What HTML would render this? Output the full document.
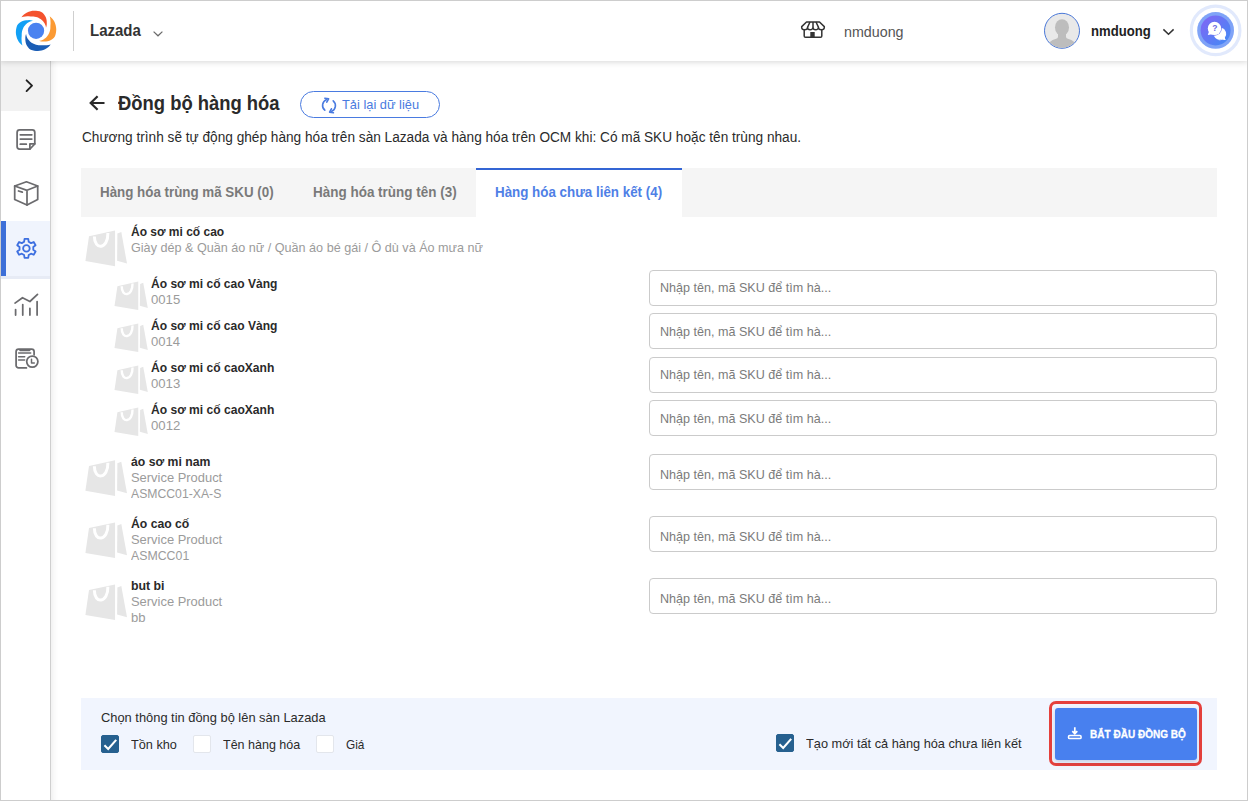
<!DOCTYPE html>
<html lang="vi">
<head>
<meta charset="utf-8">
<title>Đồng bộ hàng hóa</title>
<style>
*{box-sizing:border-box;margin:0;padding:0}
html,body{width:1248px;height:801px;overflow:hidden;background:#fff}
body{font-family:"Liberation Sans",sans-serif;color:#212121;font-size:14px;position:relative}
.t{position:absolute;white-space:nowrap;line-height:1;transform-origin:0 0}
.b{font-weight:bold}
.a{position:absolute}
svg{position:absolute;overflow:visible}
#frame{position:absolute;left:0;top:0;width:1248px;height:801px;border:1px solid #cdcdcd;z-index:50;pointer-events:none}
#header{position:absolute;left:0;top:0;width:1248px;height:61px;background:#fff;box-shadow:0 1px 6px rgba(0,0,0,.16);z-index:10}
#sidebar{position:absolute;left:0;top:61px;width:51px;height:740px;background:#fff;border-right:1px solid #cfcfcf;z-index:5}
#sidebar .tog{position:absolute;left:0;top:0;width:50px;height:50px;background:#f2f2f2}
#sidebar .act{position:absolute;left:1px;top:160px;width:49px;height:55px;background:#f0f4fd;border-left:5px solid #3d6fd8;box-shadow:0 3px 0 #e7ebf5}
#content{position:absolute;left:51px;top:61px;width:1197px;height:740px;background:#fff;box-shadow:inset 7px 0 6px -5px rgba(0,0,0,.07)}
.tabbar{position:absolute;left:81px;top:168px;width:1136px;height:49px;background:#f5f5f5}
.tabact{position:absolute;left:476px;top:168px;width:206px;height:49px;background:#fff;border-top:2px solid #3465d4}
.inp{position:absolute;left:649px;width:568px;height:36px;border:1px solid #cbcbcb;border-radius:4px;background:#fff}
.panel{position:absolute;left:81px;top:698px;width:1136px;height:72px;background:#f1f5fe}
.cb{position:absolute;width:18px;height:18px;border-radius:2px;background:#fff;border:1px solid #e3e6ec}
.cb.on{background:#26608f;border-color:#26608f}
</style>
</head>
<body>
<div id="content"></div>
<div id="sidebar"><div class="tog"></div><div class="act"></div></div>
<div id="header"></div>
<div class="a" style="left:73px;top:11px;width:1px;height:40px;background:#cfcfcf;z-index:20"></div>
<div class="a" id="btn_reload" style="left:300px;top:91px;width:140px;height:27px;border:1px solid #4a7be0;border-radius:14px"></div>
<div class="tabbar"></div><div class="tabact"></div>
<div class="inp" style="top:270px"></div>
<div class="inp" style="top:313px"></div>
<div class="inp" style="top:357px"></div>
<div class="inp" style="top:400px"></div>
<div class="inp" style="top:454px"></div>
<div class="inp" style="top:516px"></div>
<div class="inp" style="top:578px"></div>
<div class="panel"></div>
<div class="cb on" style="left:101px;top:735px"></div>
<div class="cb" style="left:193px;top:735px"></div>
<div class="cb" style="left:316px;top:735px"></div>
<div class="cb on" style="left:776px;top:734px"></div>
<div class="a" id="btn_red" style="left:1049px;top:701px;width:153px;height:65px;border:3px solid #e5403c;border-radius:7px"></div>
<div class="a" id="btn_sync" style="left:1055px;top:708px;width:142px;height:52px;background:#4880ef;border-radius:3px;box-shadow:0 2px 4px rgba(60,90,160,.25)"></div>
<svg style="left:0;top:0;z-index:20" width="80" height="60" viewBox="0 0 80 60"><path d="M21.42,17.21 L22.62,15.82 L23.95,14.54 L25.41,13.38 L27.04,12.47 L28.76,11.77 L30.54,11.23 L32.35,10.85 L34.19,10.66 L36.03,10.72 L37.85,10.96 L39.63,11.35 L41.34,11.91 L42.86,12.95 L44.09,14.4 L45.12,15.91 L45.92,17.49 L46.42,19.2 L46.7,20.89 L46.76,22.52 L46.78,23.97 L46.67,25.34 L46.4,26.62 L46,27.81 L46,27.81 L45.87,26.84 L45.65,25.87 L45.33,24.91 L44.91,23.96 L44.4,23.04 L43.79,22.16 L43.09,21.33 L42.33,20.51 L41.49,19.73 L40.55,19.01 L39.53,18.38 L38.44,17.84 L37.27,17.36 L36.04,16.97 L34.75,16.69 L33.4,16.54 L32.02,16.52 L30.56,16.48 L28.93,16.33 L27.23,16.37 L25.38,16.46 L23.42,16.71 L21.42,17.21Z" fill="#f4522d"/><path d="M49.69,16.22 L51.08,17.42 L52.36,18.75 L53.52,20.21 L54.43,21.84 L55.13,23.56 L55.67,25.34 L56.05,27.15 L56.24,28.99 L56.18,30.83 L55.94,32.65 L55.55,34.43 L54.99,36.14 L53.95,37.66 L52.5,38.89 L50.99,39.92 L49.41,40.72 L47.7,41.22 L46.01,41.5 L44.38,41.56 L42.93,41.58 L41.56,41.47 L40.28,41.2 L39.09,40.8 L39.09,40.8 L40.06,40.67 L41.03,40.45 L41.99,40.13 L42.94,39.71 L43.86,39.2 L44.74,38.59 L45.57,37.89 L46.39,37.13 L47.17,36.29 L47.89,35.35 L48.52,34.33 L49.06,33.24 L49.54,32.07 L49.93,30.84 L50.21,29.55 L50.36,28.2 L50.38,26.82 L50.42,25.36 L50.57,23.73 L50.53,22.03 L50.44,20.18 L50.19,18.22 L49.69,16.22Z" fill="#fb9a34"/><path d="M50.68,44.49 L49.48,45.88 L48.15,47.16 L46.69,48.32 L45.06,49.23 L43.34,49.93 L41.56,50.47 L39.75,50.85 L37.91,51.04 L36.07,50.98 L34.25,50.74 L32.47,50.35 L30.76,49.79 L29.24,48.75 L28.01,47.3 L26.98,45.79 L26.18,44.21 L25.68,42.5 L25.4,40.81 L25.34,39.18 L25.32,37.73 L25.43,36.36 L25.7,35.08 L26.1,33.89 L26.1,33.89 L26.23,34.86 L26.45,35.83 L26.77,36.79 L27.19,37.74 L27.7,38.66 L28.31,39.54 L29.01,40.37 L29.77,41.19 L30.61,41.97 L31.55,42.69 L32.57,43.32 L33.66,43.86 L34.83,44.34 L36.06,44.73 L37.35,45.01 L38.7,45.16 L40.08,45.18 L41.54,45.22 L43.17,45.37 L44.87,45.33 L46.72,45.24 L48.68,44.99 L50.68,44.49Z" fill="#1a5db5"/><path d="M22.41,45.48 L21.02,44.28 L19.74,42.95 L18.58,41.49 L17.67,39.86 L16.97,38.14 L16.43,36.36 L16.05,34.55 L15.86,32.71 L15.92,30.87 L16.16,29.05 L16.55,27.27 L17.11,25.56 L18.15,24.04 L19.6,22.81 L21.11,21.78 L22.69,20.98 L24.4,20.48 L26.09,20.2 L27.72,20.14 L29.17,20.12 L30.54,20.23 L31.82,20.5 L33.01,20.9 L33.01,20.9 L32.04,21.03 L31.07,21.25 L30.11,21.57 L29.16,21.99 L28.24,22.5 L27.36,23.11 L26.53,23.81 L25.71,24.57 L24.93,25.41 L24.21,26.35 L23.58,27.37 L23.04,28.46 L22.56,29.63 L22.17,30.86 L21.89,32.15 L21.74,33.5 L21.72,34.88 L21.68,36.34 L21.53,37.97 L21.57,39.67 L21.66,41.52 L21.91,43.48 L22.41,45.48Z" fill="#12a0f5"/><circle cx="36.05" cy="30.85" r="8.1" fill="#4a82f0"/></svg>

<!-- header icons -->
<svg style="left:0;top:0;z-index:20" width="1248" height="60" viewBox="0 0 1248 60" fill="none">
<path d="M153.6,31.6 L158,35.8 L162.4,31.6" stroke="#6a6a6a" stroke-width="1.2"/>
<!-- shop -->
<g stroke="#333" stroke-width="1.5" stroke-linejoin="round">
<path d="M806.5,22 H819.5 L824.3,26.6 V27.4 a2.9,2.3 0 0 1 -5.8,0 a2.75,2.3 0 0 1 -5.5,0 a2.75,2.3 0 0 1 -5.5,0 a2.9,2.3 0 0 1 -5.8,0 V26.6 Z"/>
<path d="M810,22 L807.5,27.4 M813,22 V27.4 M816,22 L818.5,27.4"/>
<path d="M804.2,30 V36 q0,1.3 1.3,1.3 H820.5 q1.3,0 1.3,-1.3 V30"/>
</g>
<rect x="810.3" y="32" width="4.4" height="5.5" fill="#333"/>
<!-- avatar -->
<circle cx="1062" cy="30.8" r="17.5" fill="#e9e9e9" stroke="#4a78d8" stroke-width="1"/>
<clipPath id="avc"><circle cx="1062" cy="30.8" r="17"/></clipPath>
<g clip-path="url(#avc)" fill="#bdbdbd">
<ellipse cx="1062" cy="27.4" rx="7" ry="8.2"/>
<path d="M1058,33 h8 v4 q0,1.3 2.5,2 q6.5,2 7,5.5 v7 h-27 v-7 q0.5,-3.5 7,-5.5 q2.5,-0.7 2.5,-2 z"/>
</g>
<path d="M1163.4,29.4 L1168.5,34.2 L1173.6,29.4" stroke="#333" stroke-width="1.5"/>
<!-- help -->
<circle cx="1215.6" cy="30.4" r="24.3" stroke="#e1e9fc" stroke-width="3.2"/>
<circle cx="1215.6" cy="30.4" r="18.4" fill="#7fa3f7"/>
<linearGradient id="hg" x1="0" y1="0" x2="1" y2="1"><stop offset="0.15" stop-color="#7a6af5"/><stop offset="0.85" stop-color="#4a86f5"/></linearGradient>
<circle cx="1215.6" cy="30.4" r="15" fill="url(#hg)"/>
<path d="M1219.5,27.8 a6,6 0 1 1 -3,11.4 l0,0 a6,6 0 0 0 6.3,0.3 l2.7,0.5 l-0.8,-2.4 a6,6 0 0 0 -5.2,-9.8z" fill="#fff"/>
<circle cx="1219.6" cy="33.8" r="6" fill="#fff"/>
<path d="M1225.5,39.9 l-1.2,-3.4 l-2.6,2.6z" fill="#fff"/>
<circle cx="1214.5" cy="28.4" r="7.3" fill="#6a72f0"/>
<circle cx="1214.5" cy="28.4" r="6.7" fill="#fff"/>
<path d="M1207.8,35 l1.3,-3.8 l3,3z" fill="#fff"/>
</svg>
<div class="t b" style="left:1212.3px;top:24.2px;font-size:8.5px;color:#6a6ae0;z-index:21">?</div>
<!-- sidebar icons -->
<svg style="left:0;top:0;z-index:6" width="52" height="400" viewBox="0 0 52 400" fill="none" stroke-linejoin="round" stroke-linecap="round"><path d="M28.68,241.78 L28.25,238.88 L24.55,238.88 L24.12,241.78 L21.81,243.12 L19.08,242.04 L17.23,245.24 L19.53,247.06 L19.53,249.74 L17.23,251.56 L19.08,254.76 L21.81,253.68 L24.12,255.02 L24.55,257.92 L28.25,257.92 L28.68,255.02 L30.99,253.68 L33.72,254.76 L35.57,251.56 L33.27,249.74 L33.27,247.06 L35.57,245.24 L33.72,242.04 L30.99,243.12Z" stroke="#3d6fe0" stroke-width="1.8"/><circle cx="26.4" cy="248.4" r="3.3" stroke="#3d6fe0" stroke-width="1.8"/>
<path d="M26.6,80.3 L32,85.7 L26.6,91.1" stroke="#222" stroke-width="1.9"/>
<g stroke="#6b6b6e" stroke-width="1.75">
<!-- note -->
<path d="M19.6,129.9 H32.3 a2.5,2.5 0 0 1 2.5,2.5 V144 L29.8,149.1 H19.6 a2.5,2.5 0 0 1 -2.5,-2.5 V132.4 a2.5,2.5 0 0 1 2.5,-2.5z"/>
<path d="M34.8,143.8 H29.9 V149"/>
<path d="M20.3,134.85 H31.8 M20.3,139 H31.8 M20.3,144.2 H26.3"/>
<!-- box -->
<path d="M26.45,181.8 L37.7,186 V199.5 L27,205 L14.7,199.5 V186z"/>
<path d="M14.7,186 L27,190.3 L37.7,186 M27,190.3 V205"/>
<path d="M18.5,191 L22.3,192.2"/>
<!-- chart -->
<path d="M15.6,309.6 V315 M22.75,304.6 V315 M29.9,308.3 V315 M37.1,301.5 V315"/>
<path d="M15,303.1 L22.5,297.75 L29.9,301.5 L37.5,294.4"/>
<!-- clipboard clock -->
<path d="M34.1,354.8 V351.5 a2.5,2.5 0 0 0 -2.5,-2.5 H18.6 a2.5,2.5 0 0 0 -2.5,2.5 V365.4 a2.5,2.5 0 0 0 2.5,2.5 H26.4"/>
<path d="M20.3,350.2 H29.4" stroke-width="2.2"/>
<path d="M18.6,353.1 H30.7 M18.6,356.7 H24.7 M18.6,359.9 H24.7" stroke-width="1.5"/>
<circle cx="32.3" cy="361.6" r="5.6"/>
<path d="M31.5,359.3 V362.9 H34.3" stroke-width="1.5"/>
</g>
</svg>
<!-- back arrow + reload icon -->
<svg style="left:0;top:0" width="460" height="130" viewBox="0 0 460 130" fill="none" stroke-linecap="butt">
<path d="M104.5,103 H91.5 M97.6,96.2 L90.7,103 L97.6,109.8" stroke="#2a2a2a" stroke-width="2.2"/>
<g stroke="#4a7be0" stroke-width="1.6" stroke-linecap="round" stroke-linejoin="round">
<path d="M324.8,110.2 A6.4,6.4 0 0 1 326.6,99.4"/>
<path d="M333.2,100.8 A6.4,6.4 0 0 1 331.4,111.6"/>
<path d="M324.8,98.2 L328.6,98.8 L326.8,102.2"/>
<path d="M333.4,112.8 L329.6,112.2 L331.4,108.8"/>
</g>
</svg>
<svg style="left:0;top:0" width="200" height="640" viewBox="0 0 200 640"><path d="M89,236.3 L115.05,230.6 L115.05,266.2 L85.4,261.1Z" fill="#e6e6e6"/><path d="M117.4,233.6 L121.3,232.1 L127,263.5 L117.1,260.8Z" fill="#e6e6e6"/><path d="M94.4,236.5 C94.2,250.5 108.2,249.5 107.9,233" stroke="#fff" stroke-width="3" fill="none"/><path d="M89,466 L115.05,460.3 L115.05,495.9 L85.4,490.8Z" fill="#e6e6e6"/><path d="M117.4,463.3 L121.3,461.8 L127,493.2 L117.1,490.5Z" fill="#e6e6e6"/><path d="M94.4,466.2 C94.2,480.2 108.2,479.2 107.9,462.7" stroke="#fff" stroke-width="3" fill="none"/><path d="M89,528.1 L115.05,522.4 L115.05,558 L85.4,552.9Z" fill="#e6e6e6"/><path d="M117.4,525.4 L121.3,523.9 L127,555.3 L117.1,552.6Z" fill="#e6e6e6"/><path d="M94.4,528.3 C94.2,542.3 108.2,541.3 107.9,524.8" stroke="#fff" stroke-width="3" fill="none"/><path d="M89,590.1 L115.05,584.4 L115.05,620 L85.4,614.9Z" fill="#e6e6e6"/><path d="M117.4,587.4 L121.3,585.9 L127,617.3 L117.1,614.6Z" fill="#e6e6e6"/><path d="M94.4,590.3 C94.2,604.3 108.2,603.3 107.9,586.8" stroke="#fff" stroke-width="3" fill="none"/><path d="M117.4,286.14 L138.24,281.58 L138.24,310.06 L114.52,305.98Z" fill="#e6e6e6"/><path d="M140.12,283.98 L143.24,282.78 L147.8,307.9 L139.88,305.74Z" fill="#e6e6e6"/><path d="M121.72,286.3 C121.56,297.5 132.76,296.7 132.52,283.5" stroke="#fff" stroke-width="2.4" fill="none"/><path d="M117.4,328.14 L138.24,323.58 L138.24,352.06 L114.52,347.98Z" fill="#e6e6e6"/><path d="M140.12,325.98 L143.24,324.78 L147.8,349.9 L139.88,347.74Z" fill="#e6e6e6"/><path d="M121.72,328.3 C121.56,339.5 132.76,338.7 132.52,325.5" stroke="#fff" stroke-width="2.4" fill="none"/><path d="M117.4,370.14 L138.24,365.58 L138.24,394.06 L114.52,389.98Z" fill="#e6e6e6"/><path d="M140.12,367.98 L143.24,366.78 L147.8,391.9 L139.88,389.74Z" fill="#e6e6e6"/><path d="M121.72,370.3 C121.56,381.5 132.76,380.7 132.52,367.5" stroke="#fff" stroke-width="2.4" fill="none"/><path d="M117.4,412.14 L138.24,407.58 L138.24,436.06 L114.52,431.98Z" fill="#e6e6e6"/><path d="M140.12,409.98 L143.24,408.78 L147.8,433.9 L139.88,431.74Z" fill="#e6e6e6"/><path d="M121.72,412.3 C121.56,423.5 132.76,422.7 132.52,409.5" stroke="#fff" stroke-width="2.4" fill="none"/></svg>
<svg style="left:0;top:0" width="1248" height="801" viewBox="0 0 1248 801" fill="none">
<path d="M104.4,745.3 L108.2,748.9 L116.2,739.9" stroke="#fff" stroke-width="2.1"/>
<path d="M779.4,744.3 L783.2,747.9 L791.2,738.9" stroke="#fff" stroke-width="2.1"/>
<g stroke="#fff" stroke-width="1.5">
<path d="M1074.8,727.3 V733.4 M1072.3,731.2 L1074.8,733.7 L1077.3,731.2" stroke-width="1.7"/>
<rect x="1068.5" y="735.6" width="12.6" height="3" rx="1.2"/>
</g>
</svg>
<div class="t b" id="t_laz" style="left:89.75px;top:22.59px;font-size:15.6px;color:#333;z-index:20;transform:scaleX(0.9616)">Lazada</div>
<div class="t" id="t_shop" style="left:843.66px;top:24.85px;font-size:14px;color:#555;z-index:20;transform:scaleX(1.0197)">nmduong</div>
<div class="t b" id="t_user" style="left:1091.25px;top:23.85px;font-size:14px;color:#222;z-index:20;transform:scaleX(0.9355)">nmduong</div>
<div class="t b" id="t_title" style="left:118.02px;top:92.67px;font-size:20px;color:#2a2a2a;transform:scaleX(0.9206)">Đồng bộ hàng hóa</div>
<div class="t" id="t_reload" style="left:342px;top:97.7px;font-size:13px;color:#4a7be0;transform:scaleX(0.987)">Tải lại dữ liệu</div>
<div class="t" id="t_desc" style="left:81.75px;top:130.25px;font-size:14px;color:#2b2b2b;transform:scaleX(0.9747)">Chương trình sẽ tự động ghép hàng hóa trên sàn Lazada và hàng hóa trên OCM khi: Có mã SKU hoặc tên trùng nhau.</div>
<div class="t b" id="t_tab1" style="left:100px;top:185.05px;font-size:14px;color:#7a7a7a;transform:scaleX(0.9537)">Hàng hóa trùng mã SKU (0)</div>
<div class="t b" id="t_tab2" style="left:312.75px;top:185.05px;font-size:14px;color:#7a7a7a;transform:scaleX(0.9624)">Hàng hóa trùng tên (3)</div>
<div class="t b" id="t_tab3" style="left:495px;top:185.05px;font-size:14px;color:#4f80e6;transform:scaleX(0.9544)">Hàng hóa chưa liên kết (4)</div>
<div class="t b" id="t_p1" style="left:131px;top:225px;font-size:13px;color:#2a2a2a;transform:scaleX(0.9225)">Áo sơ mi cố cao</div>
<div class="t" id="t_p1c" style="left:130.75px;top:241px;font-size:13px;color:#9b9b9b;transform:scaleX(0.9701)">Giày dép &amp; Quần áo nữ / Quần áo bé gái / Ô dù và Áo mưa nữ</div>
<div class="t b" id="t_v1" style="left:151.25px;top:277px;font-size:13px;color:#2a2a2a;transform:scaleX(0.9268)">Áo sơ mi cố cao Vàng</div>
<div class="t" id="t_v1s" style="left:151.07px;top:292.9px;font-size:13px;color:#9b9b9b;transform:scaleX(1.0113)">0015</div>
<div class="t b" id="t_v2" style="left:151.25px;top:319px;font-size:13px;color:#2a2a2a;transform:scaleX(0.9268)">Áo sơ mi cố cao Vàng</div>
<div class="t" id="t_v2s" style="left:150.75px;top:334.9px;font-size:13px;color:#9b9b9b;transform:scaleX(1.0054)">0014</div>
<div class="t b" id="t_v3" style="left:151.25px;top:361px;font-size:13px;color:#2a2a2a;transform:scaleX(0.9287)">Áo sơ mi cố caoXanh</div>
<div class="t" id="t_v3s" style="left:151.07px;top:376.9px;font-size:13px;color:#9b9b9b;transform:scaleX(1.0113)">0013</div>
<div class="t b" id="t_v4" style="left:151.25px;top:403px;font-size:13px;color:#2a2a2a;transform:scaleX(0.9287)">Áo sơ mi cố caoXanh</div>
<div class="t" id="t_v4s" style="left:150.75px;top:418.9px;font-size:13px;color:#9b9b9b;transform:scaleX(1.0145)">0012</div>
<div class="t b" id="t_p2" style="left:131.49px;top:454.7px;font-size:13px;color:#2a2a2a;transform:scaleX(0.9403)">áo sơ mi nam</div>
<div class="t" id="t_p2a" style="left:130.51px;top:470.6px;font-size:13px;color:#9b9b9b;transform:scaleX(0.9939)">Service Product</div>
<div class="t" id="t_p2b" style="left:131.02px;top:486.6px;font-size:13px;color:#9b9b9b;transform:scaleX(0.9397)">ASMCC01-XA-S</div>
<div class="t b" id="t_p3" style="left:131.37px;top:516.7px;font-size:13px;color:#2a2a2a;transform:scaleX(0.9385)">Áo cao cố</div>
<div class="t" id="t_p3a" style="left:130.51px;top:532.6px;font-size:13px;color:#9b9b9b;transform:scaleX(0.9939)">Service Product</div>
<div class="t" id="t_p3b" style="left:131.34px;top:548.6px;font-size:13px;color:#9b9b9b;transform:scaleX(0.9483)">ASMCC01</div>
<div class="t b" id="t_p4" style="left:130.74px;top:578.7px;font-size:13px;color:#2a2a2a;transform:scaleX(0.9481)">but bi</div>
<div class="t" id="t_p4a" style="left:130.51px;top:594.6px;font-size:13px;color:#9b9b9b;transform:scaleX(0.9939)">Service Product</div>
<div class="t" id="t_p4b" style="left:131.25px;top:610.6px;font-size:13px;color:#9b9b9b;transform:scaleX(1.0041)">bb</div>
<div class="t" id="t_choose" style="left:101px;top:711.2px;font-size:13px;color:#2b2b2b;transform:scaleX(0.9898)">Chọn thông tin đồng bộ lên sàn Lazada</div>
<div class="t" id="t_c1" style="left:130.82px;top:737.8px;font-size:13px;color:#2b2b2b;transform:scaleX(0.9771)">Tồn kho</div>
<div class="t" id="t_c2" style="left:222.75px;top:737.8px;font-size:13px;color:#2b2b2b;transform:scaleX(0.9625)">Tên hàng hóa</div>
<div class="t" id="t_c3" style="left:345.91px;top:737.8px;font-size:13px;color:#2b2b2b;transform:scaleX(0.9101)">Giá</div>
<div class="t" id="t_c4" style="left:805.55px;top:737.2px;font-size:13px;color:#2b2b2b;transform:scaleX(0.9818)">Tạo mới tất cả hàng hóa chưa liên kết</div>
<div class="t b" id="t_sync" style="left:1090.17px;top:728.79px;font-size:11px;color:#fff;-webkit-text-stroke:0.3px #fff;transform:scaleX(0.9118)">BẮT ĐẦU ĐỒNG BỘ</div>
<div class="t" id="t_in0" style="left:659.73px;top:281px;font-size:13px;color:#7b7b7b;transform:scaleX(0.9671)">Nhập tên, mã SKU để tìm hà...</div>
<div class="t" id="t_in1" style="left:659.73px;top:324.6px;font-size:13px;color:#7b7b7b;transform:scaleX(0.9671)">Nhập tên, mã SKU để tìm hà...</div>
<div class="t" id="t_in2" style="left:659.73px;top:368px;font-size:13px;color:#7b7b7b;transform:scaleX(0.9671)">Nhập tên, mã SKU để tìm hà...</div>
<div class="t" id="t_in3" style="left:659.73px;top:412px;font-size:13px;color:#7b7b7b;transform:scaleX(0.9671)">Nhập tên, mã SKU để tìm hà...</div>
<div class="t" id="t_in4" style="left:659.73px;top:468px;font-size:13px;color:#7b7b7b;transform:scaleX(0.9671)">Nhập tên, mã SKU để tìm hà...</div>
<div class="t" id="t_in5" style="left:659.73px;top:530px;font-size:13px;color:#7b7b7b;transform:scaleX(0.9671)">Nhập tên, mã SKU để tìm hà...</div>
<div class="t" id="t_in6" style="left:659.73px;top:592px;font-size:13px;color:#7b7b7b;transform:scaleX(0.9671)">Nhập tên, mã SKU để tìm hà...</div>
<div id="frame"></div>
</body>
</html>
